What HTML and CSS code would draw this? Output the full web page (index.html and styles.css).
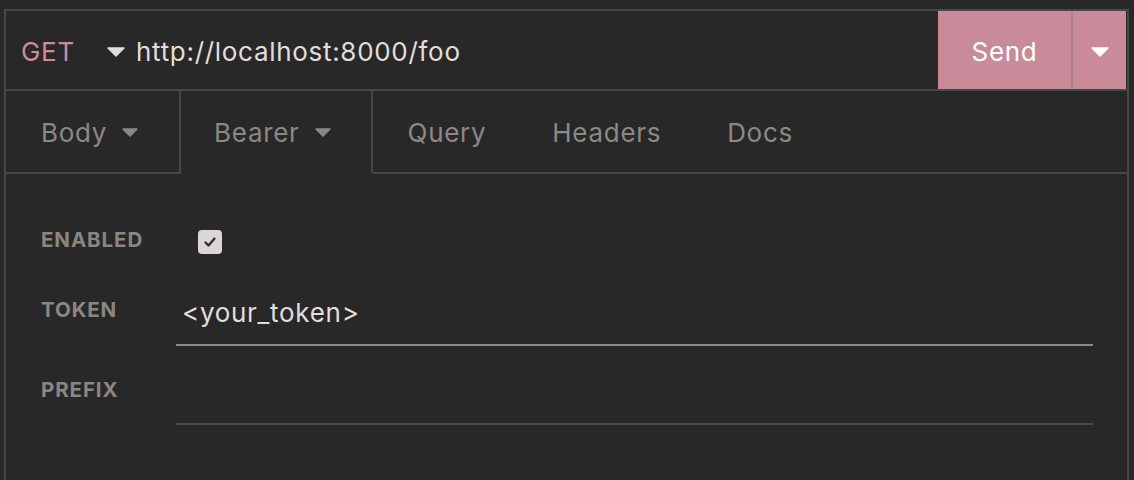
FILE: index.html
```html
<!DOCTYPE html>
<html>
<head>
<meta charset="utf-8">
<link rel="stylesheet" href="styles.css">
</head>
<body>
<div class="pane">
  <div class="urlbar">
    <div class="method">
      <span class="method-name">GET</span>
      <svg class="caret caret-lg" viewBox="0 0 18 10"><path d="M1 1 L17 1 L9 9 Z" fill="#e2dedb" stroke="#e2dedb" stroke-width="1.5" stroke-linejoin="round"/></svg>
    </div>
    <div class="url">http://localhost:8000/foo</div>
    <div class="send">
      <div class="send-label">Send</div>
      <div class="send-more"><svg class="caret caret-lg" viewBox="0 0 18 10"><path d="M1 1 L17 1 L9 9 Z" fill="#ffffff" stroke="#ffffff" stroke-width="1.5" stroke-linejoin="round"/></svg></div>
    </div>
  </div>
  <div class="tabs">
    <div class="tab tab-boxed">Body <svg class="caret caret-sm" viewBox="0 0 16 9"><path d="M1 1 L15 1 L8 8 Z" fill="#8c8984" stroke="#8c8984" stroke-width="1.5" stroke-linejoin="round"/></svg></div>
    <div class="tab tab-boxed tab-active">Bearer <svg class="caret caret-sm" viewBox="0 0 16 9"><path d="M1 1 L15 1 L8 8 Z" fill="#8c8984" stroke="#8c8984" stroke-width="1.5" stroke-linejoin="round"/></svg></div>
    <div class="tab-rest">
      <div class="tab">Query</div>
      <div class="tab">Headers</div>
      <div class="tab">Docs</div>
    </div>
  </div>
  <div class="form">
    <div class="label label-enabled">ENABLED</div>
    <div class="field field-check">
      <span class="checkbox"><svg viewBox="0 0 24 24"><path d="M7.5 12.5 L10.5 15.5 L16.5 8.5" fill="none" stroke="#2a2a2a" stroke-width="2.2" stroke-linecap="round" stroke-linejoin="round"/></svg></span>
    </div>
    <div class="label label-token">TOKEN</div>
    <div class="field field-input field-token"><span class="value">&lt;your_token&gt;</span></div>
    <div class="label label-prefix">PREFIX</div>
    <div class="field field-input field-prefix"><span class="value"></span></div>
  </div>
</div>
</body>
</html>
```
FILE: styles.css
```css
html, body {
  margin: 0;
  padding: 0;
  background: #282828;
  height: 100%;
  overflow: hidden;
}
body {
  font-family: Inter, "Noto Sans", sans-serif;
  color: #e2dedb;
}
.pane {
  margin: 9px 0 0 4px;
  width: 1121px;
  height: 600px;
  border: 2px solid #474747;
  border-bottom: none;
}
.urlbar {
  display: flex;
  align-items: stretch;
  height: 78px;
  border-bottom: 2px solid #474747;
}
.method {
  display: flex;
  align-items: center;
  padding-left: 15px;
  padding-top: 3px;
}
.method-name {
  color: #d2899e;
  font-size: 26px;
  letter-spacing: 0.7px;
  width: 86px;
}
.caret { display: block; }
.caret-lg { width: 18px; height: 10px; }
.caret-sm { width: 16px; height: 9px; }
.url {
  display: flex;
  align-items: center;
  padding-top: 3px;
  margin-left: 11px;
  font-size: 26px;
  letter-spacing: 0.7px;
  color: #e2dedb;
  flex: 1;
}
.send {
  display: flex;
  margin-right: 1px;
  background: #c98b99;
}
.send-label {
  width: 133px;
  display: flex;
  align-items: center;
  justify-content: center;
  padding-top: 3px;
  color: #ffffff;
  font-size: 26px;
  letter-spacing: 0.7px;
  border-right: 2px solid #a98690;
}
.send-more {
  width: 53px;
  display: flex;
  align-items: center;
  justify-content: center;
  padding-top: 4px;
}
.tabs {
  display: flex;
  height: 83px;
}
.tab {
  display: flex;
  align-items: center;
  gap: 15px;
  font-size: 26px;
  letter-spacing: 0.7px;
  color: #8c8984;
  padding: 1px 33px 0;
}
.tab-rest .tab:first-child { padding-left: 35px; }
.tab-boxed {
  padding: 1px 41px 0 35px;
  border-right: 2px solid #474747;
  border-bottom: 2px solid #474747;
}
.tab-boxed.tab-active {
  border-bottom-color: transparent;
  padding-left: 33px;
  padding-right: 40px;
}
.tab-rest {
  flex: 1;
  display: flex;
  border-bottom: 2px solid #474747;
}
.form {
  display: grid;
  grid-template-columns: 135px 1fr;
  padding: 42px 34px 0 35px;
}
.label {
  font-size: 20.5px;
  font-weight: 700;
  letter-spacing: 0.9px;
  color: #8a8782;
  line-height: 20px;
}
.label-enabled { padding-top: 14px; }
.label-token { padding-top: 36px; }
.label-prefix { padding-top: 34px; }
.field-check {
  height: 48px;
  display: flex;
  align-items: center;
  padding-left: 22px;
}
.checkbox {
  width: 24px;
  height: 24px;
  border-radius: 4px;
  background: #dcd6d4;
  display: block;
  margin-top: 4px;
}
.checkbox svg { width: 24px; height: 24px; display: block; }
.field-input {
  font-size: 26px;
  letter-spacing: 0.7px;
  line-height: 40px;
  padding-bottom: 11px;
}
.field-token {
  padding-top: 29px;
  border-bottom: 2px solid #8f8b87;
  padding-left: 6px;
  color: #e2dedb;
}
.field-prefix {
  padding-top: 26px;
  border-bottom: 2px solid #4a4a4a;
}
.value { display: block; height: 40px; }
```
